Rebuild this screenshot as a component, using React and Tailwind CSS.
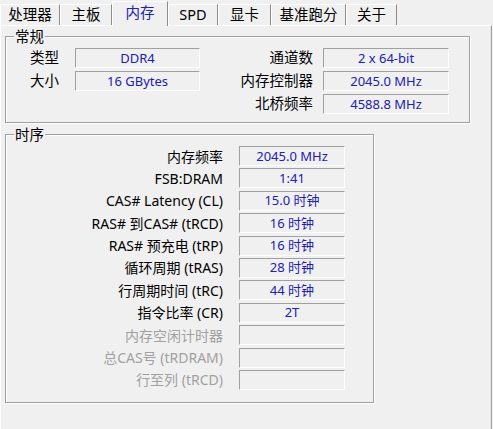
import React from "react";

const tabs = [
  { name: "处理器", w: "w-[60px]" },
  { name: "主板", w: "w-[52px]" },
  { name: "内存", w: "w-[56px]", active: true },
  { name: "SPD", w: "w-[50px]" },
  { name: "显卡", w: "w-[53px]" },
  { name: "基准跑分", w: "w-[75px]" },
  { name: "关于", w: "w-[51px]" },
];

const timings = [
  { label: "内存频率", value: "2045.0 MHz" },
  { label: "FSB:DRAM", value: "1:41" },
  { label: "CAS# Latency (CL)", value: "15.0 时钟" },
  { label: "RAS# 到CAS# (tRCD)", value: "16 时钟" },
  { label: "RAS# 预充电 (tRP)", value: "16 时钟" },
  { label: "循环周期 (tRAS)", value: "28 时钟" },
  { label: "行周期时间 (tRC)", value: "44 时钟" },
  { label: "指令比率 (CR)", value: "2T" },
  { label: "内存空闲计时器", value: "", off: true },
  { label: "总CAS号 (tRDRAM)", value: "", off: true },
  { label: "行至列 (tRCD)", value: "", off: true },
];

function Field({ children }) {
  return (
    <div className="h-[20px] flex items-center justify-center border-t border-l border-t-[#a0a0a0] border-l-[#a0a0a0] border-b border-r border-b-white border-r-white text-[13px] text-[#2020b0] leading-none">
      {children}
    </div>
  );
}

function Group({ title, className, children }) {
  return (
    <div
      className={
        "relative border border-[#a0a0a0] shadow-[inset_1px_1px_0_#ffffff,1px_1px_0_#ffffff] " +
        className
      }
    >
      <span className="absolute left-[8px] top-[-9px] bg-[#f0f0f0] px-[1px] text-[14.5px] leading-[17px] text-black">
        {title}
      </span>
      {children}
    </div>
  );
}

export default function App() {
  return (
    <div
      className="w-[493px] h-[429px] bg-[#f0f0f0] overflow-hidden"
      style={{ fontFamily: '"Noto Sans", "Noto Sans CJK SC", sans-serif' }}
    >
      {/* Tabs */}
      <div className="flex items-end h-[25px]">
        {tabs.map((t) =>
          t.active ? (
            <div
              key={t.name}
              className={
                t.w +
                " relative z-10 h-[25px] -mb-px flex items-center justify-center pb-[2px] bg-[#f0f0f0] border-t border-l border-t-white border-l-white border-r border-r-[#8c8c8c] text-[14.5px] text-[#2020b0]"
              }
            >
              {t.name}
            </div>
          ) : (
            <div
              key={t.name}
              className={
                t.w +
                " h-[21px] flex items-center justify-center bg-[#f0f0f0] border-t border-l border-t-white border-l-white border-r border-r-[#8c8c8c] text-[14.5px] text-black"
              }
            >
              {t.name}
            </div>
          )
        )}
      </div>

      {/* Panel */}
      <div className="w-[492px] h-[404px] border-t border-l border-t-white border-l-white border-r border-r-[#a0a0a0] shadow-[inset_-1px_0_0_#e3e3e3] pl-[4px]">
        <Group title="常规" className="mt-[10px] w-[465px] h-[87px] pt-[11px] pl-[24px]">
          <div className="grid grid-cols-[45px_125px_123px_126px] gap-y-[3px] text-[14.5px] text-black">
            <div className="h-[20px] flex items-center">类型</div>
            <Field>DDR4</Field>
            <div className="h-[20px] flex items-center justify-end pr-[10px]">通道数</div>
            <Field>2 x 64-bit</Field>

            <div className="h-[20px] flex items-center">大小</div>
            <Field>16 GBytes</Field>
            <div className="h-[20px] flex items-center justify-end pr-[10px]">内存控制器</div>
            <Field>2045.0 MHz</Field>

            <div className="h-[20px]" />
            <div className="h-[20px]" />
            <div className="h-[20px] flex items-center justify-end pr-[10px]">北桥频率</div>
            <Field>4588.8 MHz</Field>
          </div>
        </Group>

        <Group title="时序" className="mt-[11px] w-[369px] h-[269px] pt-[11px]">
          <div className="grid grid-cols-[233px_106px] gap-y-[2.4px] text-[14px]">
            {timings.map((r) => (
              <React.Fragment key={r.label}>
                <div
                  className={
                    "h-[20px] flex items-center justify-end pr-[16px] whitespace-nowrap " +
                    (r.off ? "text-[#a0a0a0]" : "text-black")
                  }
                >
                  {r.label}
                </div>
                <Field>{r.value}</Field>
              </React.Fragment>
            ))}
          </div>
        </Group>
      </div>
    </div>
  );
}
